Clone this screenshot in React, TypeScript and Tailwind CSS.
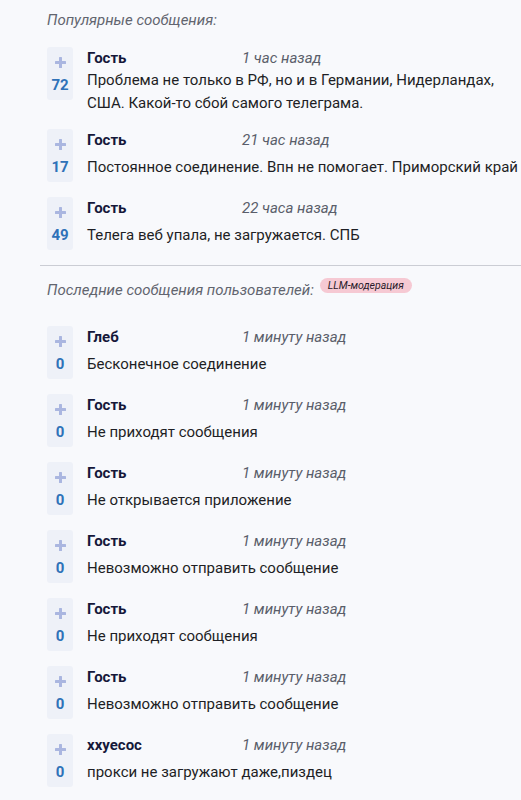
import React from 'react';

type Message = {
  author: string;
  time: string;
  text: string;
  votes: number;
};

const popular: Message[] = [
  {
    author: 'Гость',
    time: '1 час назад',
    text: 'Проблема не только в РФ, но и в Германии, Нидерландах, США. Какой-то сбой самого телеграма.',
    votes: 72,
  },
  {
    author: 'Гость',
    time: '21 час назад',
    text: 'Постоянное соединение. Впн не помогает. Приморский край',
    votes: 17,
  },
  {
    author: 'Гость',
    time: '22 часа назад',
    text: 'Телега веб упала, не загружается. СПБ',
    votes: 49,
  },
];

const recent: Message[] = [
  { author: 'Глеб', time: '1 минуту назад', text: 'Бесконечное соединение', votes: 0 },
  { author: 'Гость', time: '1 минуту назад', text: 'Не приходят сообщения', votes: 0 },
  { author: 'Гость', time: '1 минуту назад', text: 'Не открывается приложение', votes: 0 },
  { author: 'Гость', time: '1 минуту назад', text: 'Невозможно отправить сообщение', votes: 0 },
  { author: 'Гость', time: '1 минуту назад', text: 'Не приходят сообщения', votes: 0 },
  { author: 'Гость', time: '1 минуту назад', text: 'Невозможно отправить сообщение', votes: 0 },
  { author: 'xxуесос', time: '1 минуту назад', text: 'прокси не загружают даже,пиздец', votes: 0 },
];

function PlusIcon() {
  return (
    <svg width="11" height="11" viewBox="0 0 11 11" aria-hidden="true">
      <rect x="4" y="0" width="3" height="11" rx="0.5" fill="#aab6e0" />
      <rect x="0" y="4" width="11" height="3" rx="0.5" fill="#aab6e0" />
    </svg>
  );
}

function MessageRow({ msg }: { msg: Message }) {
  return (
    <div className="flex gap-[14px]">
      <div className="flex h-[53px] w-[26px] shrink-0 flex-col items-center rounded-[3px] bg-[#eef1f8] pt-[10px]">
        <PlusIcon />
        <span className="mt-[8px] text-[15px] leading-[18px] font-bold text-[#2f72b8]">{msg.votes}</span>
      </div>
      <div className="min-w-0 flex-1">
        <div className="flex h-[22px] items-center">
          <span className="w-[155px] shrink-0 text-[15px] font-bold text-[#15183a]">{msg.author}</span>
          <span className="text-[15px] italic text-[#5a5e6a]">{msg.time}</span>
        </div>
        <div className="flex min-h-[32px] items-center">
          <p className="text-[15px] leading-[23px] text-[#1e1f25]">{msg.text}</p>
        </div>
      </div>
    </div>
  );
}

export default function App() {
  return (
    <div className="min-h-[800px] bg-[#f8f9fc] pl-[40px] pt-[10px] font-['Roboto',sans-serif]">
      <div className="pl-[7px]">
        <h2 className="h-[20px] text-[15px] leading-[20px] font-normal italic text-[#62656f]">
          Популярные сообщения:
        </h2>
        <div className="mt-[17px] flex flex-col gap-[14px]">
          {popular.map((m, i) => (
            <MessageRow key={i} msg={m} />
          ))}
        </div>
      </div>

      <div className="mt-[14px] border-t border-[#cbcdd4]" />

      <div className="pl-[7px]">
        <div className="mt-[12px] flex items-start">
          <h2 className="mt-[2px] h-[20px] text-[15px] leading-[20px] font-normal italic text-[#62656f]">
            Последние сообщения пользователей:
          </h2>
          <span className="ml-[6px] rounded-full bg-[#f6c9d3] px-[8px] py-[1px] text-[10.5px] leading-[13px] italic text-[#2a1a2a]">
            LLM-модерация
          </span>
        </div>
        <div className="mt-[26px] flex flex-col gap-[14px]">
          {recent.map((m, i) => (
            <MessageRow key={i} msg={m} />
          ))}
        </div>
      </div>
    </div>
  );
}
